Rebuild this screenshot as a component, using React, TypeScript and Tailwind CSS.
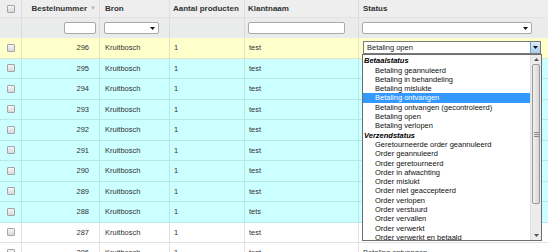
import { ReactNode } from 'react';

type Tone = 'yellow' | 'cyan' | 'white';

interface Order {
  id: number;
  name: string;
  status: string;
  tone: Tone;
}

// statuses under the open list are left blank, the list covers them anyway
const orders: Order[] = [
  { id: 296, name: 'test', status: 'Betaling open', tone: 'yellow' },
  { id: 295, name: 'test', status: '', tone: 'cyan' },
  { id: 294, name: 'test', status: '', tone: 'cyan' },
  { id: 293, name: 'test', status: '', tone: 'cyan' },
  { id: 292, name: 'test', status: '', tone: 'cyan' },
  { id: 291, name: 'test', status: '', tone: 'cyan' },
  { id: 290, name: 'test', status: '', tone: 'cyan' },
  { id: 289, name: 'test', status: '', tone: 'cyan' },
  { id: 288, name: 'tets', status: '', tone: 'cyan' },
  { id: 287, name: 'test', status: '', tone: 'white' },
  { id: 286, name: 'test', status: 'Betaling ontvangen', tone: 'white' },
];

const groups = [
  {
    label: 'Betaalstatus',
    options: [
      'Betaling geannuleerd',
      'Betaling in behandeling',
      'Betaling mislukte',
      'Betaling ontvangen',
      'Betaling ontvangen (gecontroleerd)',
      'Betaling open',
      'Betaling verlopen',
    ],
  },
  {
    label: 'Verzendstatus',
    options: [
      'Geretourneerde order geannuleerd',
      'Order geannuleerd',
      'Order geretourneerd',
      'Order in afwachting',
      'Order mislukt',
      'Order niet geaccepteerd',
      'Order verlopen',
      'Order verstuurd',
      'Order vervallen',
      'Order verwerkt',
      'Order verwerkt en betaald',
    ],
  },
];

const toneBg: Record<Tone, string> = {
  yellow: 'bg-[#ffffcc]',
  cyan: 'bg-[#ccffff]',
  white: 'bg-white',
};

const toneLine: Record<Tone, string> = {
  yellow: 'border-[#e4e4c4]',
  cyan: 'border-[#b9e6e6]',
  white: 'border-[#e2e2e2]',
};

function Checkbox() {
  return (
    <div className="w-[8px] h-[8px] border border-[#a5a5a5] rounded-[1px] bg-gradient-to-b from-[#f6f6f6] to-[#d9d9d9]" />
  );
}

function Arrow() {
  return (
    <svg width="5" height="3" viewBox="0 0 5 3" className="block">
      <path d="M0 0h5L2.5 3z" fill="#111" />
    </svg>
  );
}

function FakeSelect({ className, children }: { className: string; children?: ReactNode }) {
  return (
    <div className={`h-[12px] bg-white border border-[#a9a9a9] rounded-[2px] flex items-center justify-between pl-[3px] pr-[3px] ${className}`}>
      <span>{children}</span>
      <Arrow />
    </div>
  );
}

function Cells({ line, cells }: { line: string; cells: ReactNode[] }) {
  const widths = ['w-[22px]', 'w-[78px]', 'w-[70px]', 'w-[75px]', 'w-[114px]', 'flex-1'];
  return (
    <>
      {cells.map((c, i) => (
        <div
          key={i}
          className={`${widths[i]} h-full flex items-center ${i < 5 ? `border-r ${line}` : ''}`}
        >
          {c}
        </div>
      ))}
    </>
  );
}

function StatusDropdown() {
  return (
    <div className="absolute left-[-1px] top-full w-[180px] h-[187px] bg-white border border-[#6e6e6e] flex z-10">
      <div className="flex-1 pt-[1px]">
        {groups.map((g) => (
          <div key={g.label}>
            <div className="h-[9.3px] leading-[9.3px] pl-[1px] font-bold italic text-black">{g.label}</div>
            {g.options.map((o) => (
              <div
                key={o}
                className={`h-[9.3px] leading-[9.3px] pl-[12px] whitespace-nowrap ${
                  o === 'Betaling ontvangen' ? 'bg-[#3399ff] text-white' : 'text-[#111]'
                }`}
              >
                {o}
              </div>
            ))}
          </div>
        ))}
      </div>
      <div className="w-[11px] h-full bg-[#ececec] border-l border-[#e0e0e0] flex flex-col">
        <div className="h-[9px] flex items-center justify-center">
          <svg width="5" height="3" viewBox="0 0 5 3">
            <path d="M0 3h5L2.5 0z" fill="#555" />
          </svg>
        </div>
        <div className="h-[140px] mx-[1px] rounded-[2px] border border-[#9a9a9a] bg-gradient-to-r from-[#f2f2f2] to-[#d6d6d6] flex items-center justify-center">
          <div className="flex flex-col gap-[1px]">
            <div className="w-[5px] h-px bg-[#8a8a8a]" />
            <div className="w-[5px] h-px bg-[#8a8a8a]" />
            <div className="w-[5px] h-px bg-[#8a8a8a]" />
          </div>
        </div>
        <div className="flex-1" />
        <div className="h-[9px] flex items-center justify-center">
          <svg width="5" height="3" viewBox="0 0 5 3">
            <path d="M0 0h5L2.5 3z" fill="#555" />
          </svg>
        </div>
      </div>
    </div>
  );
}

export default function App() {
  return (
    <div className="w-[548px] h-[252px] overflow-hidden bg-white text-[7.5px] text-[#333] font-['Liberation_Sans',Arial,sans-serif]">
      {/* header */}
      <div className="flex h-[18px] bg-[#eeeeee] border-b border-[#e2e2e2] font-bold text-[8px] text-[#333]">
        <Cells
          line="border-[#dcdcdc]"
          cells={[
            <div className="w-full flex justify-center"><Checkbox /></div>,
            <div className="w-full flex justify-end items-center gap-[3px] pr-[3px]">
              <span>Bestelnummer</span>
              <span className="text-[#b5b5b5] text-[6px] font-normal">▼</span>
            </div>,
            <span className="pl-[5px]">Bron</span>,
            <span className="pl-[3px]">Aantal producten</span>,
            <span className="pl-[3px]">Klantnaam</span>,
            <span className="pl-[4px]">Status</span>,
          ]}
        />
      </div>
      {/* filters */}
      <div className="flex h-[20px] bg-[#eaecec]">
        <Cells
          line="border-[#dcdcdc]"
          cells={[
            null,
            <div className="w-full flex justify-end pr-[3px]">
              <div className="w-[32px] h-[12px] bg-white border border-[#a9a9a9] rounded-[2px]" />
            </div>,
            <div className="pl-[4px]"><FakeSelect className="w-[55px]" /></div>,
            null,
            <div className="pl-[3px]">
              <div className="w-[97px] h-[12px] bg-white border border-[#a9a9a9] rounded-[2px]" />
            </div>,
            <div className="pl-[3px]"><FakeSelect className="w-[170px]" /></div>,
          ]}
        />
      </div>
      {/* rows */}
      {orders.map((o) => (
        <div key={o.id} className={`flex h-[20.5px] border-b ${toneLine[o.tone]} ${toneBg[o.tone]}`}>
          <Cells
            line={toneLine[o.tone]}
            cells={[
              <div className="w-full flex justify-center"><Checkbox /></div>,
              <span className="w-full text-right pr-[10px]">{o.id}</span>,
              <span className="pl-[5px]">Kruitbosch</span>,
              <span className="pl-[4px]">1</span>,
              <span className="pl-[4px]">{o.name}</span>,
              o.id === 296 ? (
                <div className="relative ml-[4px] w-[178px]">
                  <div className="h-[13px] bg-white border border-[#7a7a7a] flex items-center justify-between text-[#222]">
                    <span className="pl-[3px]">{o.status}</span>
                    <div className="w-[10px] h-full bg-gradient-to-b from-[#dbeafb] to-[#a9cdf0] border-l border-[#7a9cc4] flex items-center justify-center">
                      <Arrow />
                    </div>
                  </div>
                  <StatusDropdown />
                </div>
              ) : (
                <span className="pl-[4px]">{o.status}</span>
              ),
            ]}
          />
        </div>
      ))}
    </div>
  );
}
